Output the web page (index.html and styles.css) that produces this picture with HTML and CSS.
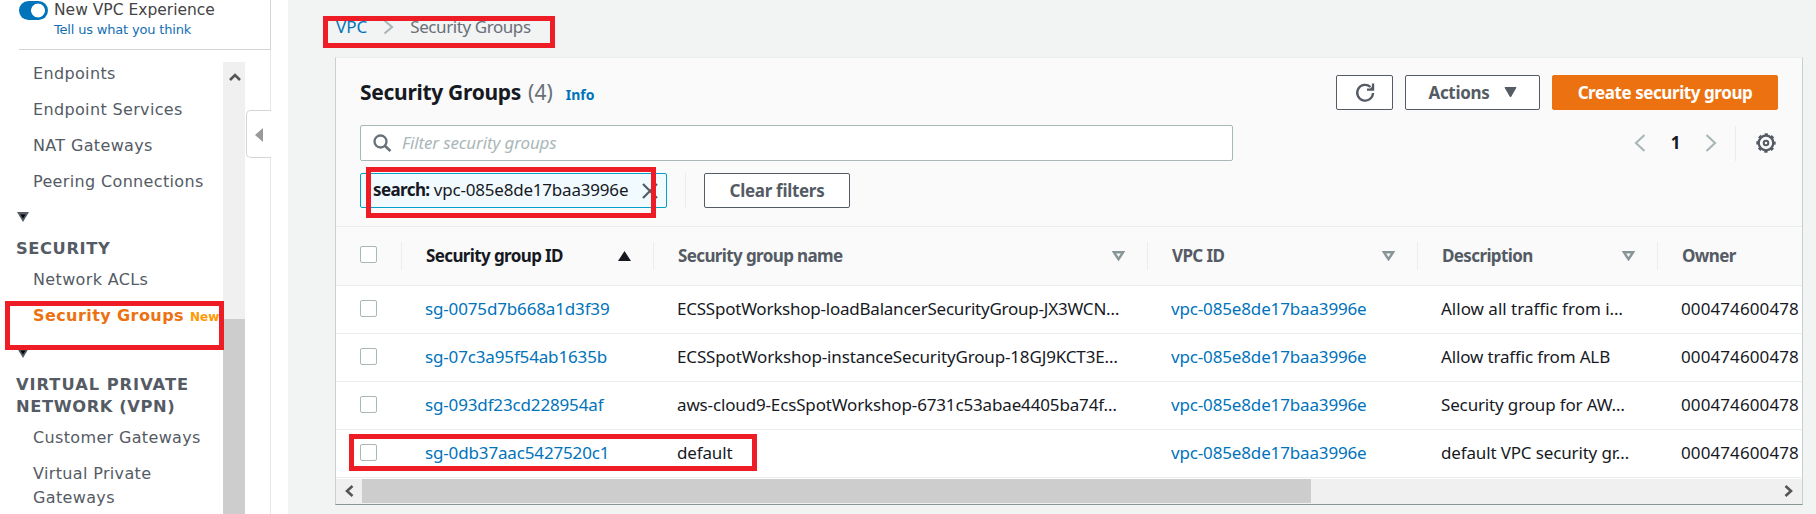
FILE: index.html
```
<!DOCTYPE html>
<html lang="en">
<head>
<meta charset="utf-8">
<title>Security Groups | VPC</title>
<link rel="stylesheet" href="styles.css">
</head>
<body>
<div class="app">
  <nav class="sidebar">
    <div class="experience">
      <span class="toggle"></span>
      <div>
        <div class="exp-title"><span>New VPC Experience</span></div>
        <a class="exp-link"><span>Tell us what you think</span></a>
      </div>
    </div>
    <div class="nav-wrap">
      <div class="nav-list">
        <a class="item"><span>Endpoints</span></a>
        <a class="item"><span>Endpoint Services</span></a>
        <a class="item"><span>NAT Gateways</span></a>
        <a class="item"><span>Peering Connections</span></a>
        <svg class="caret" width="12" height="10" viewBox="0 0 12 10"><path d="M0 0h12L6 10z" fill="#545b64"/><path d="M3.5 2.5h5L6 6.5z" fill="#000"/></svg>
        <div class="group"><span>SECURITY</span></div>
        <a class="item first"><span>Network ACLs</span></a>
        <a class="item active"><span>Security Groups</span> <small>New</small></a>
        <svg class="caret second" width="12" height="10" viewBox="0 0 12 10"><path d="M0 0h12L6 10z" fill="#545b64"/><path d="M3.5 2.5h5L6 6.5z" fill="#000"/></svg>
        <div class="group"><span class="wide">VIRTUAL PRIVATE</span><br><span>NETWORK (VPN)</span></div>
        <a class="item last"><span>Customer Gateways</span></a>
        <a class="item wrap"><span>Virtual Private</span><br><span>Gateways</span></a>
      </div>
      <div class="vscroll">
        <svg width="12" height="9" viewBox="0 0 12 9"><path d="M1 8l5-5 5 5" fill="none" stroke="#555" stroke-width="2.6"/></svg>
        <div class="vthumb"></div>
      </div>
    </div>
    <div class="collapse"><svg width="8" height="14" viewBox="0 0 8 14"><path d="M8 0v14L0 7z" fill="#999"/></svg></div>
    <div class="mark mark-nav"></div>
  </nav>

  <main class="main">
    <div class="crumbs">
      <a class="link"><span>VPC</span></a>
      <svg width="11" height="16" viewBox="0 0 11 16"><path d="M1.5 1.500l7.500 6.500-7.500 6.500" fill="none" stroke="#aab7b8" stroke-width="2.2"/></svg>
      <span class="here">Security Groups</span>
    </div>

    <section class="card">
      <header class="head">
        <div class="title-row">
          <h1><span>Security Groups</span></h1><span class="count">(4)</span><a class="info">Info</a>
          <div class="buttons">
            <button class="btn refresh"><svg width="20" height="20" viewBox="0 0 20 20"><path d="M15.500 4A7.900 7.900 0 1 0 18 10" fill="none" stroke="#545b64" stroke-width="2.300"/><path d="M19.200.5v7.300H12V5.500h3.200l1.700-1.700V.5z" fill="#545b64"/></svg></button>
            <button class="btn actions"><span>Actions</span><svg width="13" height="11" viewBox="0 0 13 11"><path d="M1 .5h11L6.500 10z" fill="#545b64" stroke="#545b64"/></svg></button>
            <button class="btn primary"><span>Create security group</span></button>
          </div>
        </div>
        <div class="search-row">
          <div class="search">
            <svg width="19" height="19" viewBox="0 0 19 19"><circle cx="7.500" cy="7.500" r="6" fill="none" stroke="#687078" stroke-width="2.300"/><path d="M12 12l5.500 5" stroke="#687078" stroke-width="2.600"/></svg>
            <span class="placeholder">Filter security groups</span>
          </div>
          <div class="pager">
            <svg width="12" height="18" viewBox="0 0 12 18"><path d="M10.500 1L2 9l8.500 8" fill="none" stroke="#aab7b8" stroke-width="2.200"/></svg>
            <b>1</b>
            <svg width="12" height="18" viewBox="0 0 12 18"><path d="M1.500 1L10 9l-8.500 8" fill="none" stroke="#aab7b8" stroke-width="2.200"/></svg>
            <i class="sep"></i>
            <svg width="20" height="20" viewBox="0 0 20 20" fill="none" stroke="#545b64"><circle cx="10" cy="10" r="7.300" stroke-width="2.300"/><circle cx="10" cy="10" r="8.800" stroke-width="1.800" stroke-dasharray="3.456 3.456" stroke-dashoffset="1.728"/><circle cx="10" cy="10" r="2.300" stroke-width="2"/></svg>
          </div>
        </div>
        <div class="filter-row">
          <div class="chip"><span class="chip-text"><b>search:</b> vpc-085e8de17baa3996e</span><svg width="16" height="16" viewBox="0 0 16 16"><path d="M1 1l14 14M15 1L1 15" stroke="#545b64" stroke-width="2.200"/></svg></div>
          <i class="sep"></i>
          <button class="btn clear"><span>Clear filters</span></button>
        </div>
      </header>

      <div class="grid thead">
        <div class="check"><i></i></div>
        <div class="th sorted"><span>Security group ID</span><svg width="13" height="10" viewBox="0 0 13 10"><path d="M6.500 0L13 10H0z" fill="#16191f"/></svg></div>
        <div class="th"><span>Security group name</span><svg width="13" height="10" viewBox="0 0 13 10"><path d="M1.900 1.300h9.200L6.500 8.200z" fill="none" stroke="#879596" stroke-width="2.400"/></svg></div>
        <div class="th"><span>VPC ID</span><svg width="13" height="10" viewBox="0 0 13 10"><path d="M1.900 1.300h9.200L6.500 8.200z" fill="none" stroke="#879596" stroke-width="2.400"/></svg></div>
        <div class="th"><span>Description</span><svg width="13" height="10" viewBox="0 0 13 10"><path d="M1.900 1.300h9.200L6.500 8.200z" fill="none" stroke="#879596" stroke-width="2.400"/></svg></div>
        <div class="th"><span>Owner</span></div>
      </div>
      <div class="grid row">
        <div class="check"><i></i></div>
        <a class="td link"><span>sg-0075d7b668a1d3f39</span></a>
        <div class="td tight"><span>ECSSpotWorkshop-loadBalancerSecurityGroup-JX3WCN…</span></div>
        <a class="td link"><span>vpc-085e8de17baa3996e</span></a>
        <div class="td normal"><span>Allow all traffic from i…</span></div>
        <div class="td owner"><span>000474600478</span></div>
      </div>
      <div class="grid row">
        <div class="check"><i></i></div>
        <a class="td link"><span>sg-07c3a95f54ab1635b</span></a>
        <div class="td"><span>ECSSpotWorkshop-instanceSecurityGroup-18GJ9KCT3E…</span></div>
        <a class="td link"><span>vpc-085e8de17baa3996e</span></a>
        <div class="td"><span>Allow traffic from ALB</span></div>
        <div class="td owner"><span>000474600478</span></div>
      </div>
      <div class="grid row">
        <div class="check"><i></i></div>
        <a class="td link"><span>sg-093df23cd228954af</span></a>
        <div class="td"><span>aws-cloud9-EcsSpotWorkshop-6731c53abae4405ba74f…</span></div>
        <a class="td link"><span>vpc-085e8de17baa3996e</span></a>
        <div class="td"><span>Security group for AW…</span></div>
        <div class="td owner"><span>000474600478</span></div>
      </div>
      <div class="grid row">
        <div class="check"><i></i></div>
        <a class="td link"><span>sg-0db37aac5427520c1</span></a>
        <div class="td"><span>default</span></div>
        <a class="td link"><span>vpc-085e8de17baa3996e</span></a>
        <div class="td"><span>default VPC security gr…</span></div>
        <div class="td owner"><span>000474600478</span></div>
      </div>
      <div class="hscroll">
        <svg width="10" height="12" viewBox="0 0 10 12"><path d="M8.500 1L3 6l5.500 5" fill="none" stroke="#555" stroke-width="2.600"/></svg>
        <div class="hthumb"></div>
        <svg class="right" width="10" height="12" viewBox="0 0 10 12"><path d="M1.500 1L7 6l-5.500 5" fill="none" stroke="#555" stroke-width="2.600"/></svg>
      </div>
    </section>
  </main>
  <div class="mark mark-crumbs"></div>
  <div class="mark mark-filter"></div>
  <div class="mark mark-row"></div>
</div>
</body>
</html>
```
FILE: styles.css
```
* { box-sizing: border-box; }
body {
  margin: 0;
  width: 1816px;
  height: 514px;
  overflow: hidden;
  font: 17px/24px "Noto Sans", "Open Sans", sans-serif;
  color: #16191f;
}
svg { display: block; flex: none; }
.app { position: relative; display: flex; height: 514px; overflow: hidden; }

/* sidebar */
.sidebar {
  position: relative;
  width: 288px;
  height: 514px;
  flex: none;
  background: linear-gradient(#e8e8e8, #e8e8e8) 270px 0 / 1px 100% no-repeat #fff;
  font-family: "DejaVu Sans", sans-serif;
  color: #545b64;
}
.experience {
  display: flex;
  gap: 6px;
  height: 50px;
  width: 252px;
  margin-left: 19px;
  border-bottom: 1px solid #d5d5d5;
  border-right: 1px solid #d5d5d5;
}
.toggle {
  width: 29px;
  height: 19px;
  margin-top: 1px;
  border-radius: 10px;
  background: radial-gradient(circle at 19px 9.5px, #fff 6.5px, #0073bb 7.3px);
}
.exp-title { font-size: 15.5px; line-height: 20px; color: #444; white-space: nowrap; }
.exp-link { display: block; font-size: 13px; line-height: 20px; letter-spacing: -0.18px; color: #146eb4; white-space: nowrap; }
.nav-wrap { display: flex; justify-content: space-between; width: 245px; height: 464px; padding-top: 12px; }
.nav-list { width: 223px; font-size: 16px; letter-spacing: 0.35px; white-space: nowrap; }
.item { display: block; height: 36px; line-height: 24px; padding-left: 33px; }
.caret { margin: 6px 0 0 17px; }
.group { margin: 16px 0 0 16px; font-weight: bold; font-size: 16.3px; letter-spacing: 0.6px; line-height: 22px; }
.group .wide { letter-spacing: 0.97px; }
.item.first { margin-top: 8px; }
.item.active { color: #ec7211; font-weight: bold; letter-spacing: 0.42px; }
.item small { font-size: 12px; letter-spacing: 0; color: #ff9900; }
.caret.second { margin-top: 8px; }
.item.last { margin-top: 8px; }
.vscroll { width: 22px; height: 452px; background: #f0f0f0; padding-top: 10px; }
.vscroll svg { margin-left: 6px; }
.vthumb { height: 195px; margin-top: 238px; background: #cdcdcd; }
.collapse {
  position: absolute;
  left: 246px;
  top: 110px;
  width: 25px;
  height: 48px;
  padding: 17px 0 0 8px;
  border: 1px solid #d5d5d5;
  border-right: 0;
  border-radius: 5px 0 0 5px;
  background: #fff;
}

/* main column */
.main { flex: 1; background: #f2f3f3; padding-left: 47px; }
.crumbs { display: flex; align-items: center; height: 57px; padding: 0 0 3px 1px; }
.crumbs svg { margin: 0 16px; }
.link { color: #0073bb; }
.here { color: #687078; letter-spacing: -0.42px; }
.card {
  width: 1468px;
  height: 448px;
  border: 1px solid #c9cfcf;
  border-top-color: #eaeded;
  border-bottom-color: #879596;
  background: #fff;
}
.head { height: 169px; background: #fafafa; border-bottom: 1px solid #eaeded; padding: 17px 24px 0; }
.title-row { display: flex; height: 35px; align-items: baseline; white-space: nowrap; }
h1 { margin: 0; font-size: 21px; line-height: 34px; letter-spacing: -0.3px; }
.count { margin-left: 7px; font-size: 21px; color: #687078; }
.info { margin-left: 13px; font-size: 14px; font-weight: bold; color: #0073bb; }
.buttons { display: flex; gap: 12px; margin-left: auto; align-self: flex-start; }
.btn {
  display: flex;
  align-items: center;
  justify-content: center;
  height: 35px;
  padding: 0;
  border: 1px solid #545b64;
  border-radius: 2px;
  background: #fff;
  color: #545b64;
  font: bold 17px/24px "Noto Sans", sans-serif;
  letter-spacing: -0.3px;
}
.refresh { width: 57px; }
.actions { width: 135px; gap: 14px; }
.primary { width: 226px; background: #ec7211; border-color: #ec7211; color: #fff; letter-spacing: -0.42px; }
.search-row { display: flex; justify-content: space-between; height: 36px; margin-top: 15px; }
.search { display: flex; align-items: center; width: 873px; border: 1px solid #aab7b8; border-radius: 2px; background: #fff; padding-left: 12px; }
.placeholder { margin-left: 10px; padding-bottom: 1px; font-style: italic; letter-spacing: -0.14px; color: #aab7b8; }
.pager { display: flex; align-items: center; padding-right: 2px; }
.pager b { width: 59px; text-align: center; }
.sep { width: 1px; height: 35px; background: #eaeded; }
.pager .sep { margin: 0 20px 0 18px; }
.filter-row { display: flex; height: 35px; margin-top: 12px; }
.chip { display: flex; align-items: center; width: 307px; border: 1px solid #00a1c9; border-radius: 2px; background: #f1faff; padding: 0 8px 0 12px; justify-content: space-between; white-space: nowrap; }
.chip-text { letter-spacing: -0.2px; padding-bottom: 1px; }
.chip-text b { letter-spacing: -0.6px; }
.filter-row .sep { margin: 0 18px; }
.clear { width: 146px; }

/* table */
.grid { display: grid; grid-template-columns: 65px 252px 494px 270px 240px 145px; height: 48px; border-bottom: 1px solid #eaeded; }
.check { display: flex; align-items: center; padding: 0 0 2px 24px; }
.check i { width: 17px; height: 17px; border: 1px solid #aab7b8; border-radius: 2px; background: #fff; }
.thead { height: 59px; background: #fafafa; align-items: center; font-weight: bold; color: #545b64; }
.thead .check { padding-bottom: 4px; }
.th { display: flex; align-items: center; justify-content: space-between; height: 28px; padding: 0 22px 0 24px; border-left: 1px solid #eaeded; letter-spacing: -0.62px; white-space: nowrap; }
.sorted { color: #16191f; }
.td { padding: 11px 0 0 24px; white-space: nowrap; overflow: hidden; letter-spacing: -0.15px; }
.td.tight { letter-spacing: -0.23px; }
.td.normal { letter-spacing: 0; }
.td.owner { letter-spacing: 0.1px; }
.hscroll { display: flex; align-items: center; height: 26px; background: linear-gradient(#fff 1px, #f0f0f0 1px); padding: 1px 8px; }
.hthumb { width: 949px; height: 24px; margin-left: 8px; background: #cdcdcd; }
.right { margin-left: auto; }

/* red highlight frames */
.mark { position: absolute; border: 5px solid #ee1c25; }
.mark-nav { left: 5px; top: 301px; width: 219px; height: 49px; }
.mark-crumbs { left: 323px; top: 16px; width: 232px; height: 32px; }
.mark-filter { left: 366px; top: 167px; width: 290px; height: 51px; }
.mark-row { left: 349px; top: 434px; width: 408px; height: 37px; }
```
